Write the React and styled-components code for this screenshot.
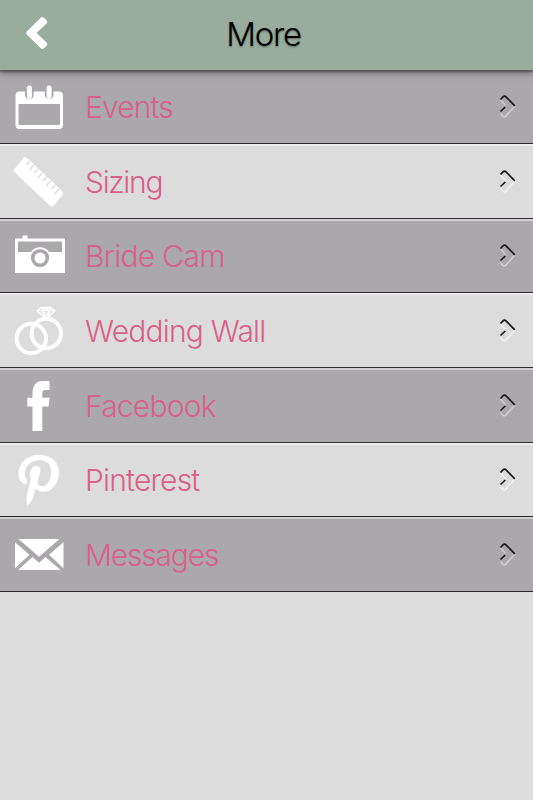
import React from 'react';
import styled, { createGlobalStyle } from 'styled-components';

const GlobalStyle = createGlobalStyle`
   * {
      box-sizing: border-box;
   }
   body {
      margin: 0;
      background-color: #dcdcdc;
      font-family: Inter, "Liberation Sans", sans-serif;
   }
`;

const Screen = styled.div`
   width: 100%;
   min-height: 100vh;
   background-color: #dcdcdc;
`;

const Header = styled.header`
   display: grid;
   grid-template-columns: 76px 1fr 76px;
   align-items: center;
   height: 70px;
   position: relative;
   z-index: 1;
   background-color: #9aac9d;
   box-shadow: 0 2px 1px rgba(75, 65, 70, 0.45), 0 2px 7px rgba(40, 35, 38, 0.7);
`;

const BackButton = styled.button`
   display: flex;
   padding: 0 0 4px 24px;
   border: none;
   background: none;
   cursor: pointer;
`;

const Title = styled.h1`
   margin: 0;
   padding: 0 6px 2px 0;
   text-align: center;
   font-size: 33px;
   font-weight: 300;
   line-height: 40px;
   letter-spacing: -1.3px;
   color: #000;
   text-shadow: 0 1px 2px rgba(0, 0, 0, 0.4);
`;

const List = styled.ul`
   margin: 0;
   padding: 0;
   list-style: none;
`;

const Row = styled.li`
   display: grid;
   grid-template-columns: 85px 1fr 34px;
   align-items: center;
   height: 74.67px;
   border-top: 2px solid ${({ $dark }) => ($dark ? '#d0d0d0' : '#ededed')};
   border-bottom: 1px solid #2c2a2d;
   background-color: ${({ $dark }) => ($dark ? '#aaa8ab' : '#dcdcdc')};
   cursor: pointer;
   &:first-child {
      height: 74px;
      padding-bottom: 1px;
      border-top-color: #aaa8ab;
   }
`;

const IconBox = styled.div`
   height: 56px;
   margin-top: -2px;
   padding-left: 10px;
   svg {
      display: block;
   }
`;

const Label = styled.span`
   font-size: 30px;
   font-weight: 300;
   line-height: 36px;
   letter-spacing: ${({ $spacing }) => $spacing}px;
   white-space: nowrap;
   color: #db5f88;
`;

const Arrow = styled.svg`
   display: block;
   margin-top: -2px;
   path {
      fill: none;
      stroke-width: 1.7;
   }
   .shade {
      stroke: #161416;
   }
   .light {
      stroke: ${({ $dark }) => ($dark ? '#cfcdd0' : '#f2f2f2')};
   }
`;

// every icon is drawn on the same 58x56 box
const Icon = ({ children }) => (
   <svg width="58" height="56" viewBox="0 0 58 56" fill="#fff">
      {children}
   </svg>
);

const CalendarIcon = () => (
   <Icon>
      <g transform="translate(0 .5)">
         <path fillRule="evenodd" d="M9 13h6v3.500a4.300 4.300 0 0 0 8.600 0V13h11.300v3.500a4.300 4.300 0 0 0 8.600 0V13h5.500a4 4 0 0 1 4 4v29.500a4 4 0 0 1-4 4H9.500a4 4 0 0 1-4-4V17a4 4 0 0 1 3.500-4zM9.500 25.500a1 1 0 0 0-1 1V45a1.500 1.500 0 0 0 1.500 1.500h38.500A1.500 1.500 0 0 0 50 45V26.500a1 1 0 0 0-1-1z" />
         <rect x="16.900" y="7" width="5" height="13.500" rx="2.500" />
         <rect x="36.600" y="7" width="5" height="13.500" rx="2.500" />
      </g>
   </Icon>
);

const RulerIcon = () => (
   <Icon>
      <path d="M4.500 15.800 13.500 5.200Q15 3.200 17 5L52.300 38.300Q54 40 52.500 42L43.500 52.700Q41.800 54.500 40 52.800L4.800 19.500Q2.800 17.700 4.500 15.800z" />
      <path
         stroke="#dcdcdc"
         strokeWidth="1.300"
         d="M19.500 8l-3.400 4M23.800 12l-4.600 5.200M28 16l-3.400 4M32.200 20l-4.600 5.200M36.400 24l-3.400 4M40.600 28l-4.600 5.200M44.800 32l-3.400 4M49 36l-4.600 5.200"
      />
   </Icon>
);

const CameraIcon = () => (
   <Icon>
      <g transform="translate(0 1)">
         <path d="M5 10.500h7.500v-3h5v3H55V45H5z" />
         <path fill="#aaa8ab" d="M8 13.500h44V24H8z" />
         <circle cx="30" cy="30" r="10.800" />
         <circle cx="30" cy="30" r="7.300" fill="none" stroke="#aaa8ab" strokeWidth="3.600" />
      </g>
   </Icon>
);

const RingsIcon = () => (
   <Icon>
      <g fill="none" stroke="#fff" strokeWidth="4">
         <circle cx="21.300" cy="36.500" r="14.700" />
         <circle cx="36.300" cy="31.500" r="14.700" />
      </g>
      <path fill="none" stroke="#fff" strokeWidth="1.300" d="M31 5.500h10l4 3.200-9 8.500-9-8.500zM27 8.700h18M31 5.500l2.500 3.200L36 5.500l2.500 3.200L41 5.500M32.500 8.700 36 17l3.500-8.300" />
      <path d="M30 10h12l-6 7z" opacity="0.5" />
   </Icon>
);

const FacebookIcon = () => (
   <Icon>
      <path d="M22.500 54V29.500h-5.200V20.800h5.200v-4C22.500 8.500 26 4 33 4h6.500v9h-3.800c-2.600 0-3.400.9-3.400 3.500v4.300h7.200l-.8 8.700h-6.400V54z" />
   </Icon>
);

const PinterestIcon = () => (
   <Icon>
      <g transform="translate(3.100 4.200) scale(2.560 2.500)">
         <path stroke="#fff" strokeWidth="0.250" d="M8.617 13.227C8.091 15.981 7.450 18.621 5.549 20c-.586-4.162.861-7.287 1.534-10.605-1.147-1.930.138-5.812 2.555-4.855 2.975 1.176-2.576 7.172 1.150 7.922 3.890.781 5.479-6.750 3.066-9.199C10.370-.274 3.708 3.180 4.528 8.245c.199 1.238 1.478 1.613.511 3.322-2.231-.494-2.897-2.254-2.811-4.600.138-3.840 3.449-6.527 6.771-6.900 4.201-.471 8.144 1.543 8.689 5.494.613 4.461-1.896 9.293-6.389 8.945-1.218-.095-1.728-.699-2.682-1.279z" />
      </g>
   </Icon>
);

const MailIcon = () => (
   <Icon>
      <g transform="translate(0 .7)">
         <path d="M8.500 12.300h41L29 30z" />
         <path d="M5 15.500 19.500 28 5 41.500zM53.500 15.500V41.500L39 28z" />
         <path d="M8 43.300 22.500 30.300 29 36l6.500-5.700L50.500 43.300z" />
      </g>
   </Icon>
);

const items = [
   { label: 'Events', icon: CalendarIcon, spacing: -0.9 },
   { label: 'Sizing', icon: RulerIcon, spacing: -1.3 },
   { label: 'Bride Cam', icon: CameraIcon, spacing: -0.7 },
   { label: 'Wedding Wall', icon: RingsIcon, spacing: -0.8 },
   { label: 'Facebook', icon: FacebookIcon, spacing: -0.8 },
   { label: 'Pinterest', icon: PinterestIcon, spacing: -0.8 },
   { label: 'Messages', icon: MailIcon, spacing: -1.2 },
];

const MenuRow = ({ label, icon: ItemIcon, spacing, dark }) => (
   <Row $dark={dark}>
      <IconBox>
         <ItemIcon />
      </IconBox>
      <Label $spacing={spacing}>{label}</Label>
      <Arrow $dark={dark} width="18" height="24" viewBox="0 0 18 24">
         <path className="light" d="M1.500 6l5 5.500M16 12 6.500 22.300Q5 23.500 3.500 22L1.500 19.500" />
         <path className="shade" d="M1.500 5.500 4 2.800Q5.500 1.500 7 2.800L15.800 11.800M1.500 17.500 6.300 13" />
      </Arrow>
   </Row>
);

const App = () => {
   return (
      <Screen>
         <GlobalStyle />
         <Header>
            <BackButton aria-label="Back">
               <svg width="26" height="34" viewBox="0 0 26 34">
                  <path fill="#fff" d="M2.800 15.500 17 1.600q1.300-1.300 2.600 0l3.200 3q1.300 1.400 0 2.700L12.500 17l10.300 9.800q1.300 1.400 0 2.700l-3.200 3q-1.300 1.300-2.600 0L2.800 18.500q-1.500-1.500 0-3z" />
               </svg>
            </BackButton>
            <Title>More</Title>
         </Header>
         <List>
            {items.map((item, i) => (
               <MenuRow key={item.label} {...item} dark={i % 2 === 0} />
            ))}
         </List>
      </Screen>
   );
};

export default App;
